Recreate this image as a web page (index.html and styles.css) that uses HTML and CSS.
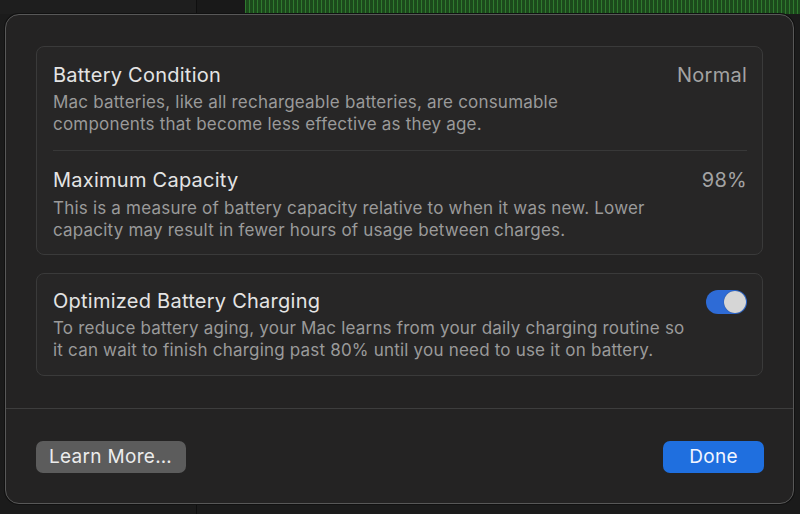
FILE: index.html
```html
<!DOCTYPE html>
<html lang="en">
<head>
<meta charset="utf-8">
<title>Battery Health</title>
<link rel="stylesheet" href="styles.css">
</head>
<body>
<div class="desktop">
  <div class="bg-panel bg-left"></div>
  <div class="bg-panel bg-mid"></div>
  <div class="bg-green"></div>
  <div class="bg-line bg-line-a"></div>
</div>
<div class="dialog">
  <div class="dialog-body">
    <section class="card">
      <div class="row">
        <div class="text">
          <div class="title">Battery Condition</div>
          <div class="desc">Mac batteries, like all rechargeable batteries, are consumable<br>components that become less effective as they age.</div>
        </div>
        <div class="value">Normal</div>
      </div>
      <div class="sep"></div>
      <div class="row row-second">
        <div class="text">
          <div class="title">Maximum Capacity</div>
          <div class="desc">This is a measure of battery capacity relative to when it was new. Lower<br>capacity may result in fewer hours of usage between charges.</div>
        </div>
        <div class="value">98%</div>
      </div>
    </section>
    <section class="card">
      <div class="row row-toggle">
        <div class="text">
          <div class="title">Optimized Battery Charging</div>
          <div class="desc">To reduce battery aging, your Mac learns from your daily charging routine so<br>it can wait to finish charging past 80% until you need to use it on battery.</div>
        </div>
        <div class="toggle"><span class="knob"></span></div>
      </div>
    </section>
  </div>
  <div class="dialog-footer">
    <button class="btn btn-secondary">Learn More…</button>
    <button class="btn btn-primary">Done</button>
  </div>
</div>
</body>
</html>
```
FILE: styles.css
```css
html, body {
  margin: 0;
  padding: 0;
}
body {
  width: 800px;
  height: 514px;
  background: #1b1b1b;
  position: relative;
  overflow: hidden;
  font-family: Inter, "Noto Sans", "Liberation Sans", sans-serif;
}
.desktop {
  position: absolute;
  inset: 0;
}
.bg-panel {
  position: absolute;
  top: 0;
  height: 14px;
}
.bg-left {
  left: 0;
  width: 196px;
  background: #1e1e1e;
}
.bg-mid {
  left: 197px;
  width: 48px;
  background: #191919;
}
.bg-green {
  position: absolute;
  top: 0;
  left: 245px;
  right: 0;
  height: 14px;
  background: repeating-linear-gradient(90deg, #2f7a2f 0, #2f7a2f 1.5px, #1c4a1c 1.5px, #1c4a1c 4px);
}
.bg-line {
  position: absolute;
  width: 1px;
  background: #0f0f0f;
}
.bg-line-a {
  left: 196px;
  top: 0;
  bottom: 0;
}
.dialog {
  position: absolute;
  left: 5px;
  top: 14px;
  width: 787px;
  height: 488px;
  background: #242323;
  border: 1px solid #585858;
  border-radius: 14px;
  display: flex;
  flex-direction: column;
  box-shadow: 0 0 0 1px #111;
}
.dialog-body {
  padding: 31px 30px 32px;
  display: flex;
  flex-direction: column;
  gap: 18px;
  border-bottom: 1px solid #3d3d3d;
}
.card {
  background: #272626;
  border: 1px solid #3a3a3a;
  border-radius: 8px;
}
.row {
  display: flex;
  justify-content: space-between;
  align-items: flex-start;
  padding: 16px 15px 15px 16px;
}
.row-second {
  padding-top: 17px;
  padding-bottom: 13px;
}
.row-second .text {
  gap: 5px;
}
.row-toggle {
  padding-top: 15px;
  padding-bottom: 14px;
}
.sep {
  height: 1px;
  background: #383838;
  margin: 0 15px 0 16px;
}
.text {
  display: flex;
  flex-direction: column;
  gap: 4px;
}
.title {
  font-size: 20px;
  line-height: 24px;
  letter-spacing: 0.25px;
  color: #e4e4e4;
  white-space: nowrap;
}
.desc {
  font-size: 17px;
  line-height: 22px;
  letter-spacing: 0.2px;
  color: #9a9a9a;
  white-space: nowrap;
}
.value {
  font-size: 20px;
  line-height: 24px;
  letter-spacing: 0.25px;
  color: #a3a3a3;
}
.toggle {
  width: 41px;
  height: 24px;
  border-radius: 12px;
  background: #2e6bd6;
  margin-top: 1px;
  display: flex;
  align-items: center;
  justify-content: flex-end;
  padding: 0 1px;
  box-sizing: border-box;
}
.knob {
  width: 22px;
  height: 22px;
  border-radius: 50%;
  background: #d6d6d6;
  box-shadow: 0 0 1px rgba(0,0,0,0.5);
}
.dialog-footer {
  flex: 1;
  display: flex;
  justify-content: space-between;
  align-items: flex-start;
  padding: 32px 29px 0 30px;
}
.btn {
  height: 32px;
  border: none;
  border-radius: 7px;
  font-family: Inter, "Noto Sans", "Liberation Sans", sans-serif;
  font-size: 19px;
  line-height: 32px;
  letter-spacing: 0.3px;
  color: #ececec;
  padding: 0 13px;
}
.btn-secondary {
  background: #5c5c5c;
  width: 150px;
  text-align: left;
}
.btn-primary {
  background: #1f6fdf;
  width: 101px;
  text-align: center;
  color: #f2f6ff;
}
```
